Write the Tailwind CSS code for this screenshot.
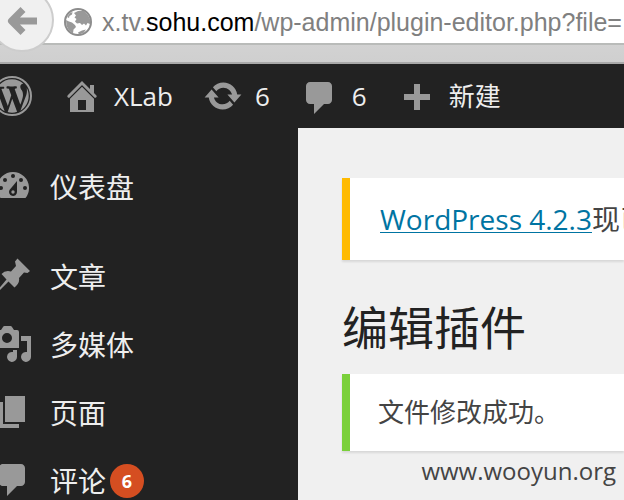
<!DOCTYPE html>
<html lang="zh-CN">
<head>
<meta charset="utf-8">
<title>编辑插件</title>
<script src="https://cdn.jsdelivr.net/npm/@tailwindcss/browser@4"></script>
</head>
<body class="flex h-screen flex-col overflow-hidden bg-[#222] font-['Open_Sans','Noto_Sans_CJK_SC',sans-serif] text-[26px] text-[#eee]">
  <!-- Browser toolbar -->
  <header class="relative h-16 shrink-0 border-b-2 border-[#a9a9a9] bg-linear-to-b from-[#dadada] to-[#cfcfcf]">
    <div class="flex h-[45px] items-center gap-2.5 border-b-2 border-[#b9bbb9] bg-white pl-16">
      <svg class="size-7 shrink-0" viewBox="0 0 28 28" aria-hidden="true">
        <circle cx="14" cy="14" r="13" fill="#fff" stroke="#8c8c8c" stroke-width="2"/>
        <path fill="#999" d="M10 5L14 3 20 3 24 7 26.500 12 26 16 23.500 15 22 17.500 20 15.500 18 17 16 15 13 15.500 11 13.500 12.500 11 10.500 9.500 12 7.500zM2 12L5 13.500 8 14.500 11 17 12 19 9.500 21.500 9 25.500 5 22.500 2.500 18zM3 9L6 5 8.500 4 8 6.500 5.500 8 5 10zM14 24.500L18 22.500 22 21.500 19.500 25 15 26.500z"/>
      </svg>
      <div role="textbox" aria-label="地址" class="whitespace-nowrap font-['Liberation_Sans',sans-serif] text-[25px] leading-[30px] text-[#808080]">x.tv.<span class="text-black">sohu.com</span>/wp-admin/plugin-editor.php?file=</div>
    </div>
    <button type="button" aria-label="后退" class="absolute -top-3 -left-2.5 flex size-16 items-center justify-center rounded-full border-2 border-[#cdcdcd] bg-[#f0f0f0]">
      <svg class="mt-0.5 size-8" viewBox="0 0 32 32" fill="none" stroke="#999" stroke-width="7" stroke-linejoin="round" aria-hidden="true"><path d="M17 4.500L5.500 16 17 27.500M6 16h25"/></svg>
    </button>
  </header>

  <!-- Admin bar -->
  <nav class="-ml-2 flex h-16 shrink-0 items-center gap-[30px] whitespace-nowrap leading-9" aria-label="工具栏">
    <a href="#" aria-label="WordPress">
      <svg class="size-10" viewBox="0 0 20 20" fill="#999" aria-hidden="true">
        <circle cx="10" cy="10" r="9.500" fill="none" stroke="#999" stroke-width="1"/>
        <path transform="translate(.6 .6) scale(.94)" d="M7.780 15.370L4.370 6.220c.55-.02 1.170-.08 1.170-.08.5-.06.44-1.130-.06-1.110 0 0-1.450.11-2.370.11-.18 0-.37 0-.58-.01C4.120 2.690 6.870 1.110 10 1.110c2.330 0 4.450.87 6.050 2.340-.68-.11-1.650.39-1.650 1.580 0 .74.45 1.360.9 2.100.35.61.55 1.360.55 2.460 0 1.490-1.400 5-1.400 5l-3.030-8.370c.54-.02.82-.17.82-.17.5-.05.44-1.250-.06-1.220 0 0-1.440.12-2.380.12-.87 0-2.330-.12-2.330-.12-.5-.03-.56 1.200-.06 1.220l.92.08 1.260 3.410zM17.410 10c.24-.64.74-1.870.43-4.250.7 1.290 1.050 2.710 1.050 4.250 0 3.290-1.730 6.240-4.400 7.780.97-2.590 1.940-5.200 2.920-7.780zM6.100 18.090C3.120 16.650 1.110 13.530 1.110 10c0-1.300.23-2.480.72-3.590C3.250 10.300 4.670 14.200 6.100 18.090zm4.030-6.630l2.580 6.980c-.86.29-1.760.45-2.710.45-.79 0-1.570-.11-2.290-.33.81-2.380 1.620-4.740 2.420-7.100z"/>
      </svg>
    </a>
    <a href="#" class="flex items-center gap-3">
      <svg class="size-10" viewBox="62 76 40 40" aria-hidden="true">
        <path fill="#999" fill-rule="evenodd" d="M70 98l12-12 12 12v14H70zM78 100v10h8v-10z"/>
        <path fill="#999" d="M90 85h4v9l-4-4z"/>
        <path fill="none" stroke="#222" stroke-width="1.500" d="M68.500 99.200L82 85.700l13.500 13.500"/>
        <path fill="none" stroke="#999" stroke-width="3" stroke-linecap="round" d="M68.800 96.200L82 83l13.200 13.200"/>
      </svg>
      <span>XLab</span>
    </a>
    <a href="#" class="flex items-center gap-3" aria-label="6 个更新">
      <svg class="size-10" viewBox="0 0 20 20" fill="#999" aria-hidden="true"><path d="M10.200 3.280c3.530 0 6.430 2.610 6.920 6h2.080l-3.500 4-3.500-4h2.320c-.45-1.970-2.210-3.450-4.320-3.450-1.450 0-2.730.71-3.540 1.780L4.950 5.660C6.230 4.200 8.110 3.280 10.200 3.280zm-.4 13.440c-3.520 0-6.430-2.610-6.920-6H.8l3.500-4c1.170 1.330 2.330 2.670 3.500 4H5.480c.45 1.970 2.210 3.450 4.320 3.450 1.450 0 2.730-.71 3.540-1.780l1.710 1.950c-1.280 1.460-3.150 2.380-5.250 2.380z"/></svg>
      <span>6</span>
    </a>
    <a href="#" class="flex items-center gap-3" aria-label="6 条评论">
      <svg class="size-10" viewBox="0 0 20 20" fill="#999" aria-hidden="true"><path d="M5 3h9c1.100 0 2 .9 2 2v7c0 1.100-.9 2-2 2h-2l-5 5v-5H5c-1.100 0-2-.9-2-2V5c0-1.100.9-2 2-2z"/></svg>
      <span>6</span>
    </a>
    <a href="#" class="flex items-center gap-3">
      <svg class="size-10" viewBox="0 0 40 40" fill="#999" aria-hidden="true"><path d="M17 8h6v10h10v6H23v10h-6V24H7v-6h10z"/></svg>
      <span>新建</span>
    </a>
  </nav>

  <div class="flex min-h-0 flex-1">
    <!-- Side menu -->
    <nav class="w-[298px] shrink-0 pt-[25px] text-[28px] leading-10" aria-label="主菜单">
      <ul class="-ml-[7px]">
        <li class="mb-[22px]"><a href="#" class="flex h-[68px] items-center gap-[17px]">
          <svg class="size-10" viewBox="-7 167 40 40" aria-hidden="true">
            <path fill="#999" d="M.5 198A16 16 0 1 1 25.500 198z"/>
            <g fill="#222"><circle cx="13" cy="176" r="2"/><circle cx="5" cy="180" r="2"/><circle cx="21" cy="180" r="2"/><circle cx="1" cy="188" r="2"/><circle cx="25" cy="188" r="2"/><path d="M17 181v11a4 4 0 1 1-7.500-2z"/></g>
            <circle cx="13" cy="192" r="1.700" fill="#999"/>
          </svg>
          <span>仪表盘</span></a></li>
        <li><a href="#" class="flex h-[68px] items-center gap-[17px]">
          <svg class="size-10" viewBox="-7 257 40 40" fill="#999" aria-hidden="true"><path d="M17.500 258.500L30 271 27.500 273 24 272.500 19 278Q20 283 14.500 287.500L8.500 281.500 0 290-4 293-1 288.500 6.500 279.500 1.500 274Q5 270 11 271.500L16 266 15 261.500z"/></svg>
          <span>文章</span></a></li>
        <li><a href="#" class="flex h-[68px] items-center gap-[17px]">
          <svg class="size-10" viewBox="-7 325 40 40" fill="#999" aria-hidden="true">
            <path fill-rule="evenodd" d="M-4 330H1l2-3q.5-1 1.500-1h6q1 0 1.500 1l2 3h3q2 0 2 2v16H-4q-1 0-1-1v-16q0-1 1-1zM7 333a5 5 0 1 0 0 10 5 5 0 0 0 0-10z"/>
            <path d="M21 336h10v21a5 5 0 1 1-4-5v-11h-6zM13 350h4v7a5 5 0 1 1-4-5z"/>
          </svg>
          <span>多媒体</span></a></li>
        <li><a href="#" class="flex h-[68px] items-center gap-[17px]">
          <svg class="size-10" viewBox="-7 393 40 40" fill="#999" aria-hidden="true"><path d="M5 396h20v26H5zM-1 402h4v22h16v4H-1z"/></svg>
          <span>页面</span></a></li>
        <li><a href="#" class="flex h-[68px] items-center gap-[17px]">
          <svg class="size-10" viewBox="0 0 20 20" fill="#999" aria-hidden="true"><path d="M5 1.500h9c1.100 0 2 .9 2 2v7c0 1.100-.9 2-2 2h-2l-5 5v-5H5c-1.100 0-2-.9-2-2v-7c0-1.100.9-2 2-2z"/></svg>
          <span class="flex items-center gap-1">评论 <span class="flex size-[34px] items-center justify-center rounded-full bg-[#d54e21] text-[18px] font-bold text-white">6</span></span></a></li>
      </ul>
    </nav>

    <!-- Page content -->
    <main class="min-w-0 flex-1 overflow-hidden bg-[#f0f0f0] pt-[50px] pl-11 text-[#444]">
      <p class="flex h-[82px] items-center overflow-hidden border-l-8 border-[#ffba00] bg-white pl-[30px] text-[28px] whitespace-nowrap shadow-[0_2px_2px_rgba(0,0,0,0.1)]"><a href="#" class="text-[#0074a2] underline decoration-1 underline-offset-2">WordPress 4.2.3</a>现已可用！</p>
      <h1 class="mt-[34px] text-[46px] leading-[66px] font-normal text-[#222]">编辑插件</h1>
      <p class="mt-3.5 flex h-[77px] items-center border-l-8 border-[#7ad03a] bg-white pl-7 whitespace-nowrap shadow-[0_2px_2px_rgba(0,0,0,0.1)]">文件修改成功。</p>
      <p class="pr-2 text-right text-[24px] leading-10">www.wooyun.org</p>
    </main>
  </div>
</body>
</html>
